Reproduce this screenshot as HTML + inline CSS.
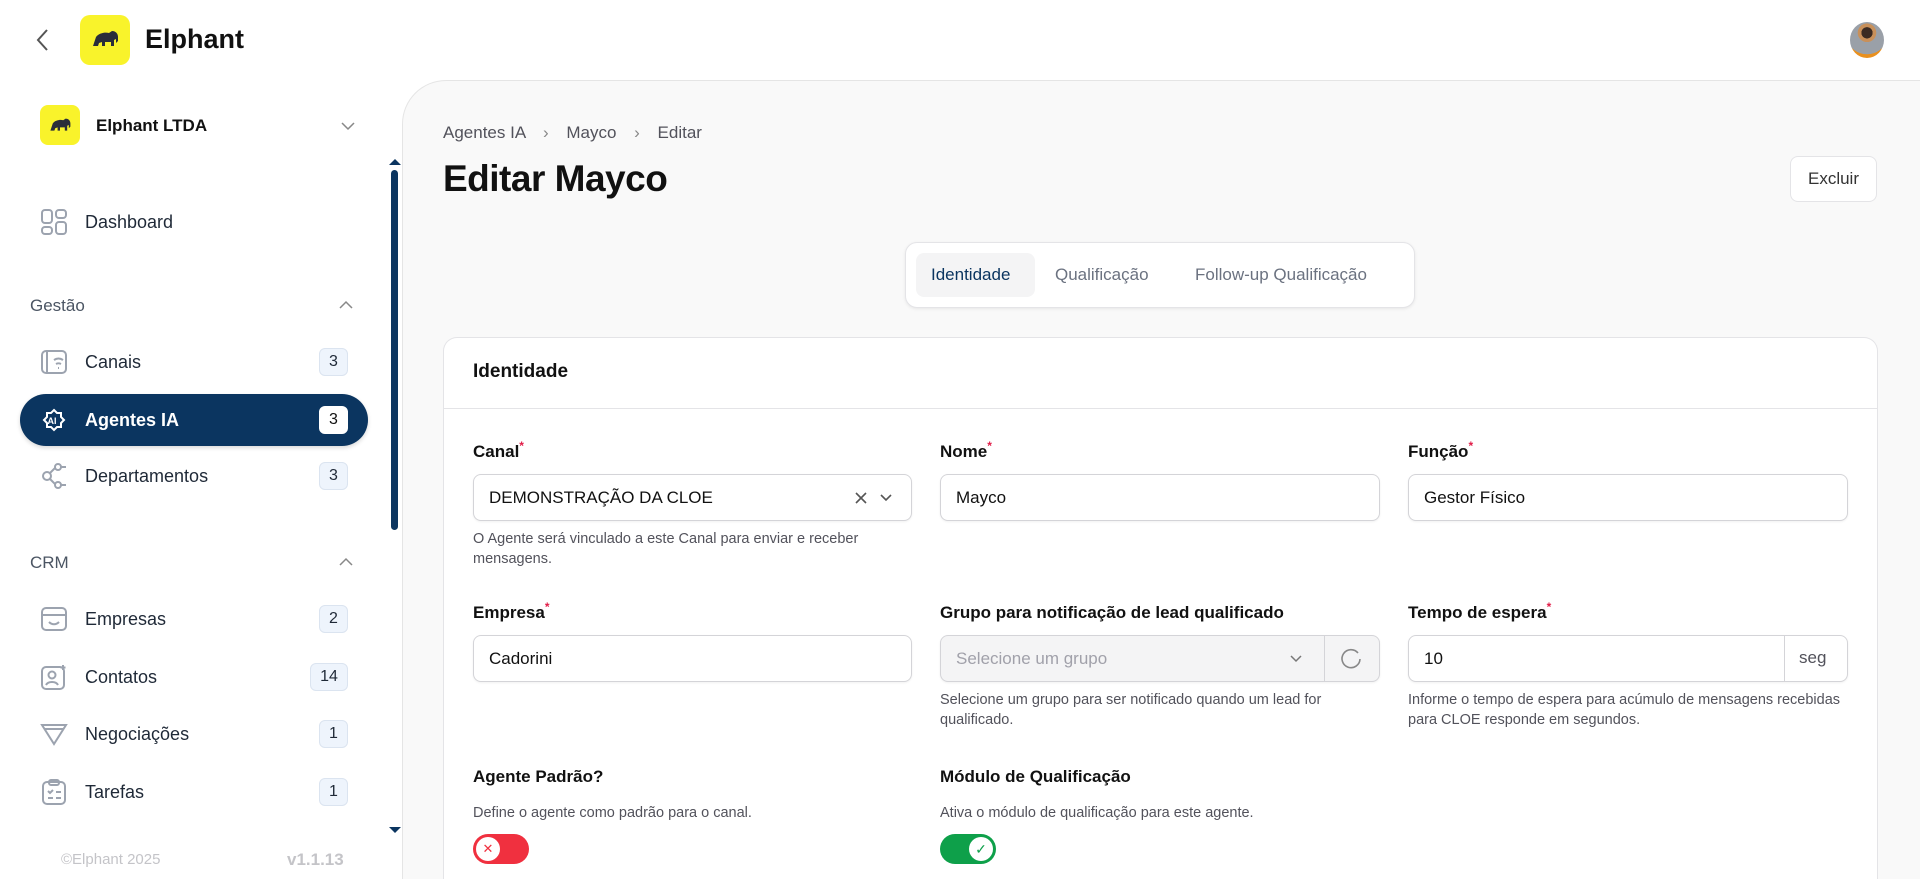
<!DOCTYPE html>
<html style="overflow:hidden;height:879px"><head><meta charset="utf-8"><style>
*{box-sizing:border-box;margin:0;padding:0}
body{width:1920px;height:879px;overflow:hidden;background:#fff;font-family:"Liberation Sans",Arial,sans-serif;color:#111;position:relative}
.abs{position:absolute}
.nav{position:absolute;left:20px;width:348px;height:52px;display:flex;align-items:center;font-size:18px;color:#1f2937}
.nav .ic{position:absolute;left:20px;top:12px;width:28px;height:28px}
.nav .t{position:absolute;left:65px}
.badge{position:absolute;left:299px;top:12px;min-width:29px;height:28px;padding:0 6px;border:1px solid #dbe4f0;background:#eef4fc;border-radius:6px;font-size:16px;display:flex;align-items:center;justify-content:center;color:#1f2937}
.sec{position:absolute;left:30px;font-size:17px;color:#4b5563}
.lbl{position:absolute;font-size:17px;font-weight:bold;color:#111}
.lbl sup{color:#e11d48;font-size:12px;vertical-align:top;position:relative;top:-3px}
.inp{position:absolute;height:47px;border:1px solid #d4d4d8;border-radius:8px;background:#fff;font-size:17px;display:flex;align-items:center;padding-left:15px;box-shadow:0 1px 2px rgba(0,0,0,.06)}
.help{position:absolute;font-size:14.5px;color:#52525b;line-height:20px}
</style></head><body>

<svg class="abs" style="left:34px;top:27px" width="18" height="26" viewBox="0 0 18 26"><path d="M13 3L4 13l9 10" fill="none" stroke="#555" stroke-width="2"/></svg>
<div class="abs" style="left:80px;top:15px;width:50px;height:50px;background:#f9f32b;border-radius:10px"></div>
<svg class="abs" style="left:90px;top:28px" width="30" height="22" viewBox="0 0 30 22"><path d="M3 18l3-9c3-4 9-5 13-4l3-2c4 0 6 3 6 6v4l-2 2v-4l-2 1v6h-3v-4h-6v4h-3v-4l-3 1-1 3z" fill="#2a2d3a"/></svg>
<div class="abs" style="left:145px;top:24px;font-size:27px;font-weight:bold">Elphant</div>
<div class="abs" style="left:1850px;top:22px;width:34px;height:36px;border-radius:50%;background:radial-gradient(circle at 50% 30%,#3a2a22 0 18%,#c8905a 19% 30%,#9aa0a8 31% 70%,#e9901e 71%)"></div>

<div class="abs" style="left:40px;top:105px;width:40px;height:40px;background:#f9f32b;border-radius:8px"></div>
<svg class="abs" style="left:48px;top:116px" width="24" height="18" viewBox="0 0 30 22"><path d="M3 18l3-9c3-4 9-5 13-4l3-2c4 0 6 3 6 6v4l-2 2v-4l-2 1v6h-3v-4h-6v4h-3v-4l-3 1-1 3z" fill="#2a2d3a"/></svg>
<div class="abs" style="left:96px;top:116px;font-size:17px;font-weight:bold;color:#111">Elphant LTDA</div>
<svg class="abs" style="left:340px;top:120px" width="16" height="12"><path d="M2 3l6 6 6-6" fill="none" stroke="#888" stroke-width="1.5"/></svg>

<svg class="abs" style="left:389px;top:158px" width="12" height="8"><path d="M0 7l6-6 6 6z" fill="#0b3560"/></svg>
<div class="abs" style="left:391px;top:170px;width:7px;height:360px;background:#0b3560;border-radius:4px"></div>
<svg class="abs" style="left:389px;top:826px" width="12" height="8"><path d="M0 1l6 6 6-6z" fill="#0b3560"/></svg>

<div class="nav" style="top:196px"><svg class="ic" viewBox="0 0 28 28" fill="none" stroke="#9ca3af" stroke-width="2"><rect x="2" y="2" width="10" height="13" rx="3"/><rect x="16" y="2" width="10" height="8" rx="3"/><rect x="2" y="19" width="10" height="7" rx="3"/><rect x="16" y="14" width="10" height="12" rx="3"/></svg><span class="t">Dashboard</span></div>

<div class="sec" style="top:296px">Gestão</div>
<svg class="abs" style="left:338px;top:299px" width="16" height="12"><path d="M2 9l6-6 6 6" fill="none" stroke="#888" stroke-width="1.5"/></svg>

<div class="nav" style="top:336px"><svg class="ic" viewBox="0 0 28 28" fill="none" stroke="#9ca3af" stroke-width="2"><rect x="2" y="3" width="24" height="22" rx="4"/><path d="M7 4v20M14 12c3-2 6-2 9 0M16 16c2-1 3-1 5 0M18 20h1"/></svg><span class="t">Canais</span><div class="badge">3</div></div>

<div class="nav" style="top:394px;background:#0b3560;border-radius:26px;color:#fff;font-weight:bold;box-shadow:0 2px 4px rgba(0,0,0,.15)"><svg class="ic" viewBox="0 0 28 28" fill="none" stroke="#fff" stroke-width="2"><path d="M14 2l3 3h4v4l3 3-3 3v4h-4l-3 3-3-3H7v-4l-3-3 3-3V5h4z" transform="translate(0,2)"/><text x="7.5" y="18" font-size="9" fill="#fff" stroke="none" font-family="Liberation Sans" font-weight="bold">AI</text></svg><span class="t">Agentes IA</span><div class="badge" style="background:#fff;border-color:#fff;color:#111;font-weight:normal">3</div></div>

<div class="nav" style="top:450px"><svg class="ic" viewBox="0 0 28 28" fill="none" stroke="#9ca3af" stroke-width="2"><circle cx="7" cy="14" r="4"/><circle cx="18" cy="5" r="3"/><circle cx="18" cy="23" r="3"/><path d="M10 11l5-5M10 17l5 5M21 5h5M21 23h5"/></svg><span class="t">Departamentos</span><div class="badge">3</div></div>

<div class="sec" style="top:553px">CRM</div>
<svg class="abs" style="left:338px;top:556px" width="16" height="12"><path d="M2 9l6-6 6 6" fill="none" stroke="#888" stroke-width="1.5"/></svg>

<div class="nav" style="top:593px"><svg class="ic" viewBox="0 0 28 28" fill="none" stroke="#9ca3af" stroke-width="2"><rect x="2" y="3" width="24" height="22" rx="4"/><path d="M2 10h24M9 17c3 3 7 3 10 0"/></svg><span class="t">Empresas</span><div class="badge">2</div></div>
<div class="nav" style="top:651px"><svg class="ic" viewBox="0 0 28 28" fill="none" stroke="#9ca3af" stroke-width="2"><rect x="2" y="4" width="22" height="22" rx="4"/><circle cx="12" cy="12" r="3.5"/><path d="M6 22c2-4 10-4 12 0M23 2v5M20.5 4.5h5"/></svg><span class="t">Contatos</span><div class="badge" style="left:290px;min-width:38px">14</div></div>
<div class="nav" style="top:708px"><svg class="ic" viewBox="0 0 28 28" fill="none" stroke="#9ca3af" stroke-width="2"><path d="M2 5h24l-12 19z"/><path d="M4 9h20"/></svg><span class="t">Negociações</span><div class="badge">1</div></div>
<div class="nav" style="top:766px"><svg class="ic" viewBox="0 0 28 28" fill="none" stroke="#9ca3af" stroke-width="2"><rect x="3" y="4" width="22" height="22" rx="4"/><rect x="9" y="2" width="10" height="5" rx="2"/><path d="M8 13l2 2 3-3M16 14h5M8 20h5M16 20h5"/></svg><span class="t">Tarefas</span><div class="badge">1</div></div>

<div class="abs" style="left:61px;top:851px;font-size:15px;color:#c4c4c8">©Elphant 2025</div>
<div class="abs" style="left:287px;top:850px;font-size:17px;font-weight:bold;color:#c4c4c8">v1.1.13</div>

<div class="abs" style="left:402px;top:80px;width:1518px;height:799px;background:#f9f9f9;border:1px solid #e5e5e5;border-right:none;border-bottom:none;border-radius:44px 0 0 0"></div>
<div class="abs" style="left:443px;top:123px;font-size:17px;color:#52525b">Agentes IA <span style="margin:0 13px;color:#888">›</span> Mayco <span style="margin:0 13px;color:#888">›</span> Editar</div>
<div class="abs" style="left:443px;top:158px;font-size:37px;font-weight:bold;color:#111;letter-spacing:-.5px">Editar Mayco</div>
<div class="abs" style="left:1790px;top:156px;width:87px;height:46px;border:1px solid #e4e4e7;border-radius:8px;background:#fff;font-size:17px;display:flex;align-items:center;justify-content:center;color:#333">Excluir</div>

<div class="abs" style="left:905px;top:242px;width:510px;height:66px;background:#fff;border:1px solid #e4e4e7;border-radius:12px;box-shadow:0 1px 3px rgba(0,0,0,.08)"></div>
<div class="abs" style="left:916px;top:253px;width:119px;height:44px;background:#f4f4f5;border-radius:8px"></div>
<div class="abs" style="left:931px;top:265px;font-size:17px;color:#0b3560">Identidade</div>
<div class="abs" style="left:1055px;top:265px;font-size:17px;color:#6b7280">Qualificação</div>
<div class="abs" style="left:1195px;top:265px;font-size:17px;color:#6b7280">Follow-up Qualificação</div>

<div class="abs" style="left:443px;top:337px;width:1435px;height:542px;background:#fff;border:1px solid #e4e4e7;border-bottom:none;border-radius:14px 14px 0 0"></div>
<div class="abs" style="left:443px;top:408px;width:1435px;height:1px;background:#e4e4e7"></div>
<div class="abs" style="left:473px;top:361px;font-size:19px;font-weight:bold">Identidade</div>

<div class="lbl" style="left:473px;top:442px">Canal<sup>*</sup></div>
<div class="lbl" style="left:940px;top:442px">Nome<sup>*</sup></div>
<div class="lbl" style="left:1408px;top:442px">Função<sup>*</sup></div>
<div class="inp" style="left:473px;top:474px;width:439px">DEMONSTRAÇÃO DA CLOE
<svg class="abs" style="left:380px;top:16px" width="14" height="14"><path d="M2 2l10 10M12 2L2 12" stroke="#555" stroke-width="1.6"/></svg>
<svg class="abs" style="left:405px;top:18px" width="14" height="10"><path d="M2 2l5 5 5-5" fill="none" stroke="#555" stroke-width="1.6"/></svg></div>
<div class="inp" style="left:940px;top:474px;width:440px">Mayco</div>
<div class="inp" style="left:1408px;top:474px;width:440px">Gestor Físico</div>
<div class="help" style="left:473px;top:529px;width:440px">O Agente será vinculado a este Canal para enviar e receber mensagens.</div>

<div class="lbl" style="left:473px;top:603px">Empresa<sup>*</sup></div>
<div class="lbl" style="left:940px;top:603px">Grupo para notificação de lead qualificado</div>
<div class="lbl" style="left:1408px;top:603px">Tempo de espera<sup>*</sup></div>
<div class="inp" style="left:473px;top:635px;width:439px">Cadorini</div>
<div class="inp" style="left:940px;top:635px;width:440px;background:#f4f4f5;color:#a1a1aa">Selecione um grupo
<svg class="abs" style="left:348px;top:18px" width="14" height="10"><path d="M2 2l5 5 5-5" fill="none" stroke="#777" stroke-width="1.5"/></svg>
<div class="abs" style="left:383px;top:0;width:1px;height:45px;background:#d4d4d8"></div>
<svg class="abs" style="left:398px;top:11px" width="24" height="24"><path d="M19 6A9 9 0 1 0 21 12" fill="none" stroke="#888" stroke-width="1.6"/></svg></div>
<div class="inp" style="left:1408px;top:635px;width:440px">10
<div class="abs" style="left:375px;top:0;width:1px;height:45px;background:#d4d4d8"></div>
<span class="abs" style="left:390px;top:12px;color:#52525b">seg</span></div>
<div class="help" style="left:940px;top:690px;width:440px">Selecione um grupo para ser notificado quando um lead for qualificado.</div>
<div class="help" style="left:1408px;top:690px;width:440px">Informe o tempo de espera para acúmulo de mensagens recebidas para CLOE responde em segundos.</div>

<div class="lbl" style="left:473px;top:767px">Agente Padrão?</div>
<div class="lbl" style="left:940px;top:767px">Módulo de Qualificação</div>
<div class="help" style="left:473px;top:803px">Define o agente como padrão para o canal.</div>
<div class="help" style="left:940px;top:803px">Ativa o módulo de qualificação para este agente.</div>
<div class="abs" style="left:473px;top:834px;width:56px;height:30px;border-radius:15px;background:#f0303f"></div>
<div class="abs" style="left:476px;top:837px;width:24px;height:24px;border-radius:50%;background:#fff;color:#f0303f;font-size:13px;text-align:center;line-height:24px">✕</div>
<div class="abs" style="left:940px;top:834px;width:56px;height:30px;border-radius:15px;background:#0ea04a"></div>
<div class="abs" style="left:969px;top:837px;width:24px;height:24px;border-radius:50%;background:#fff;color:#0ea04a;font-size:14px;text-align:center;line-height:24px">✓</div>
</body></html>
